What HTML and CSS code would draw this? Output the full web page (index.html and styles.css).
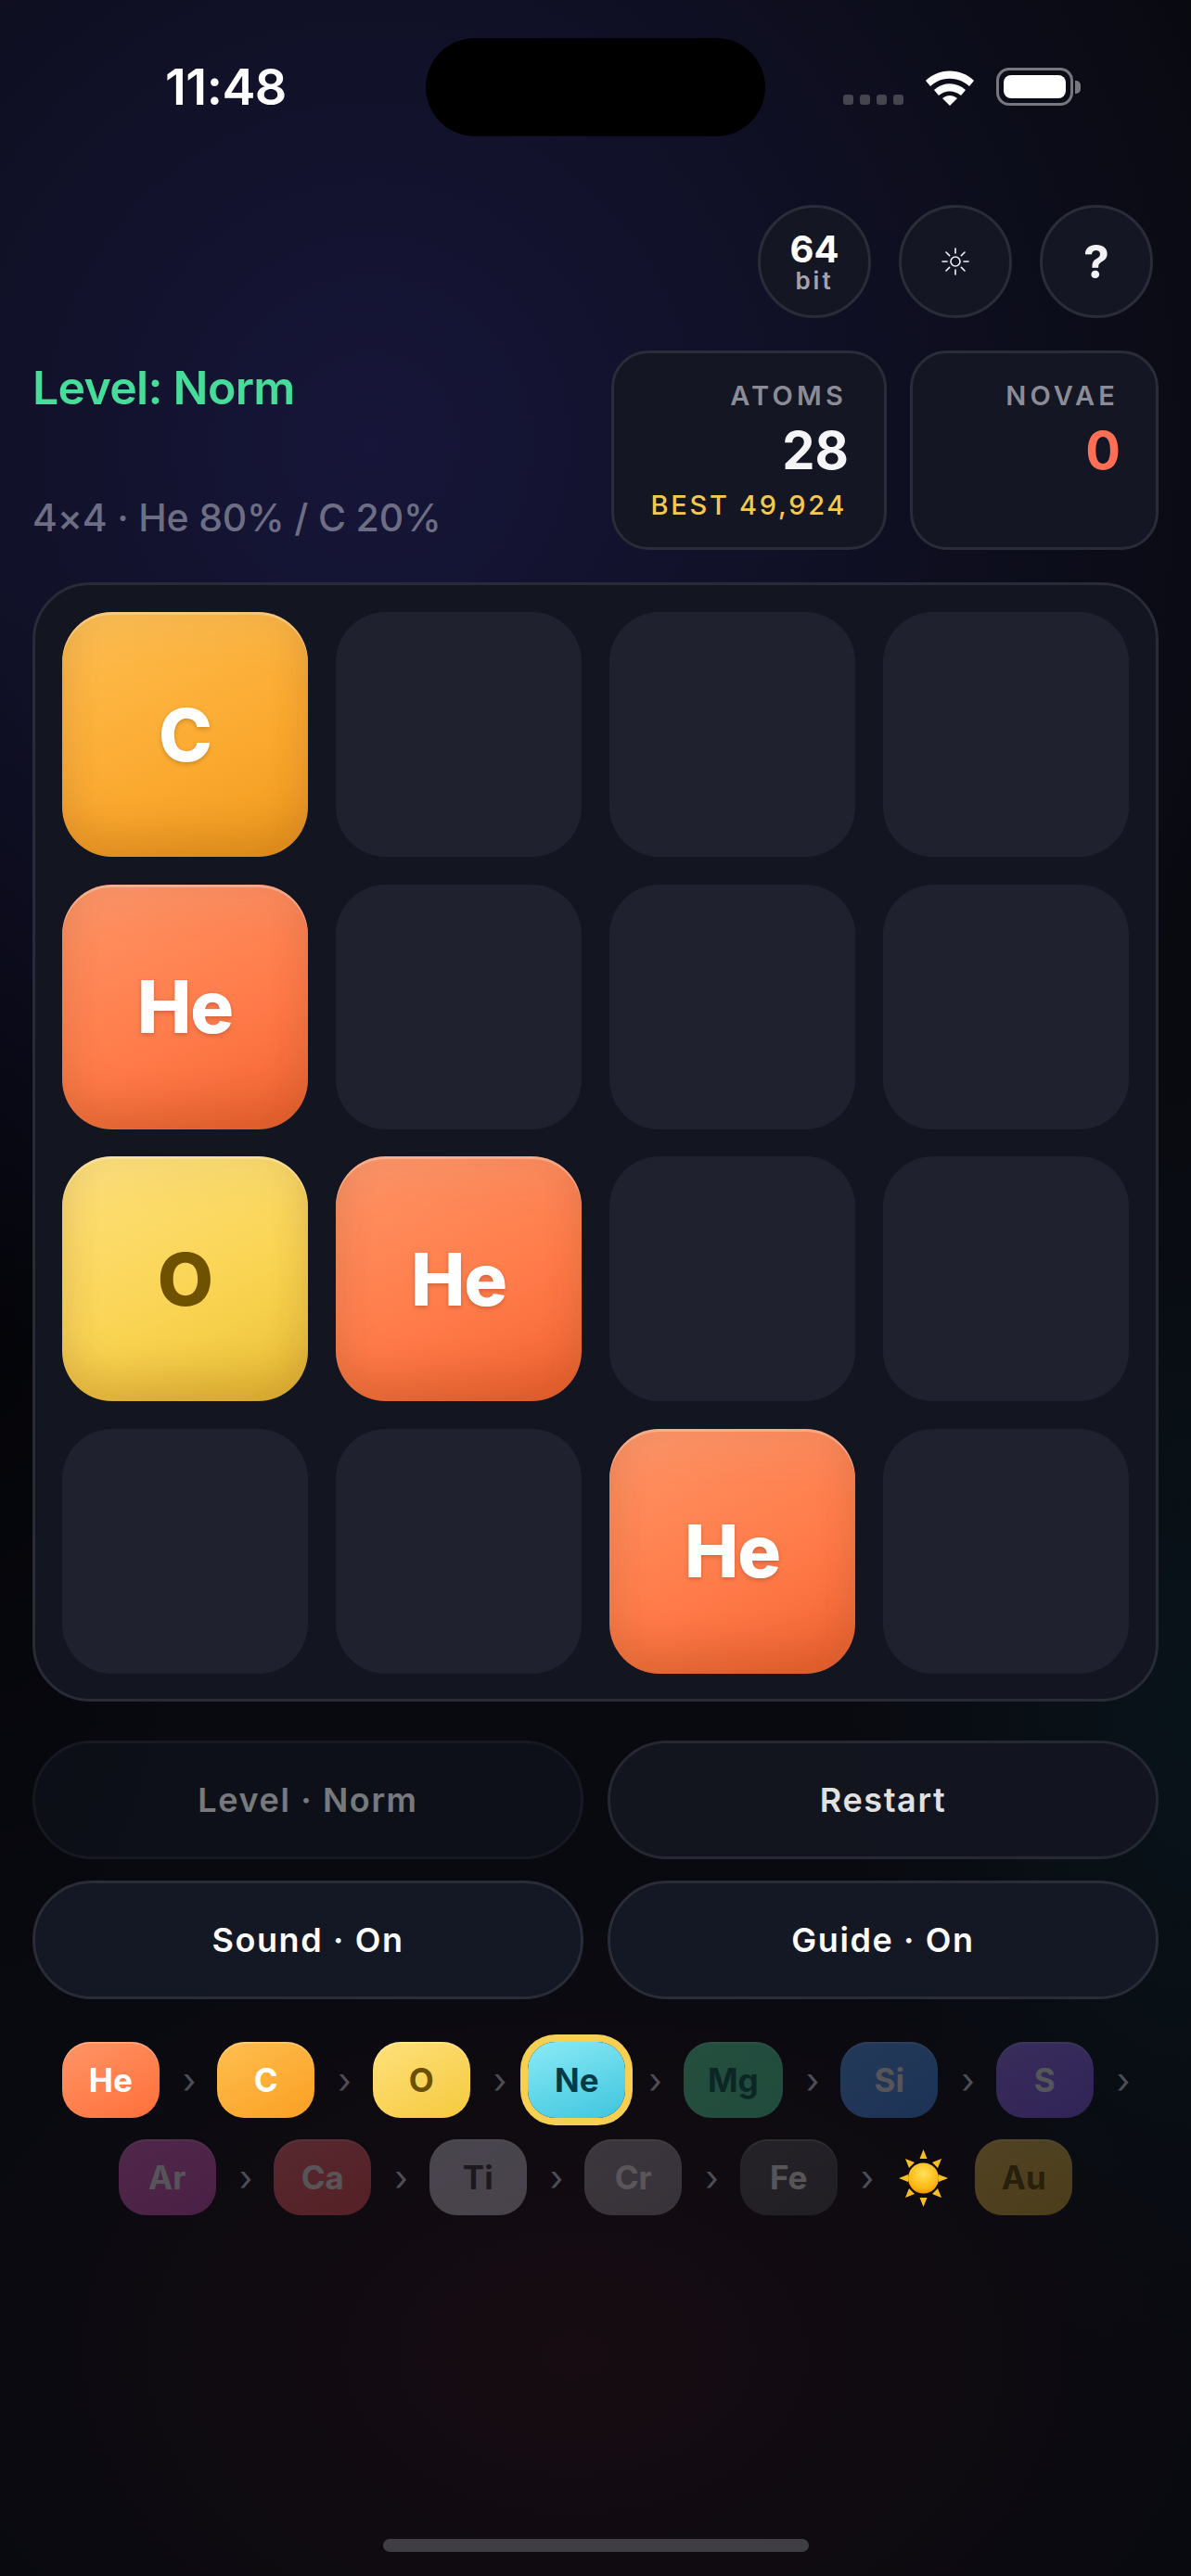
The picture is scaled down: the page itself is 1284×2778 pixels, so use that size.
FILE: index.html
```html
<!DOCTYPE html>
<html lang="en">
  <head>
    <meta charset="UTF-8" />
    <meta name="viewport" content="width=device-width, initial-scale=1.0" />
    <title>Atoms</title>
    <link rel="stylesheet" href="styles.css">
  </head>
  <body>
    <div class="island"></div>

    <div class="status-bar">
      <span class="time">11:48</span>
      <div class="status-icons">
        <div class="signal"><i></i><i></i><i></i><i></i></div>
        <svg class="wifi" width="56" height="40" viewBox="0 0 56 40">
          <path d="M2 13 C16 -1 40 -1 54 13 L49 19 C37 8 19 8 7 19 Z" fill="#fff" />
          <path d="M11 23 C21 14 35 14 45 23 L40 29 C33 23 23 23 16 29 Z" fill="#fff" />
          <path d="M20 32 C25 28 31 28 36 32 L28 40 Z" fill="#fff" />
        </svg>
        <div class="battery"><div class="battery-fill"></div></div>
        <div class="battery-cap"></div>
      </div>
    </div>

    <div class="round-buttons">
      <div class="round-btn">
        <span class="bit-num">64</span>
        <span class="bit-label">bit</span>
      </div>
      <div class="round-btn">
        <svg width="30" height="30" viewBox="0 0 30 30" fill="none" stroke="#f2f2f5" stroke-width="1.6" stroke-linecap="round">
          <circle cx="15" cy="15" r="5" />
          <path d="M15 1V6M15 24V29M1 15H6M24 15H29M5 5L8.6 8.6M21.4 21.4L25 25M5 25L8.6 21.4M21.4 8.6L25 5" />
        </svg>
      </div>
      <div class="round-btn"><span class="help">?</span></div>
    </div>

    <div class="info-row">
      <div class="level-info">
        <div class="level-name">Level: Norm</div>
        <div class="level-desc">4×4 · He 80% / C 20%</div>
      </div>
      <div class="stat-card atoms-card">
        <div class="stat-label">ATOMS</div>
        <div class="stat-value">28</div>
        <div class="stat-best">BEST 49,924</div>
      </div>
      <div class="stat-card novae-card">
        <div class="stat-label">NOVAE</div>
        <div class="stat-value red">0</div>
      </div>
    </div>

    <div class="board">
      <div class="tile tile-c">C</div><div class="cell"></div><div class="cell"></div><div class="cell"></div>
      <div class="tile tile-he">He</div><div class="cell"></div><div class="cell"></div><div class="cell"></div>
      <div class="tile tile-o">O</div><div class="tile tile-he">He</div><div class="cell"></div><div class="cell"></div>
      <div class="cell"></div><div class="cell"></div><div class="tile tile-he">He</div><div class="cell"></div>
    </div>

    <div class="actions">
      <button class="action disabled">Level · Norm</button>
      <button class="action restart">Restart</button>
      <button class="action">Sound · On</button>
      <button class="action">Guide · On</button>
    </div>

    <div class="chain">
      <div class="chip chip-he">He</div><span class="arrow">›</span>
      <div class="chip chip-c">C</div><span class="arrow">›</span>
      <div class="chip chip-o">O</div><span class="arrow">›</span>
      <div class="chip chip-ne">Ne</div><span class="arrow">›</span>
      <div class="chip locked chip-mg">Mg</div><span class="arrow">›</span>
      <div class="chip locked chip-si">Si</div><span class="arrow">›</span>
      <div class="chip locked chip-s">S</div><span class="arrow">›</span>
      <div class="chip locked chip-ar">Ar</div><span class="arrow">›</span>
      <div class="chip locked chip-ca">Ca</div><span class="arrow">›</span>
      <div class="chip locked chip-ti">Ti</div><span class="arrow">›</span>
      <div class="chip locked chip-cr">Cr</div><span class="arrow">›</span>
      <div class="chip locked chip-fe">Fe</div><span class="arrow">›</span>
      <svg class="sun" width="61" height="62" viewBox="0 0 61 62">
        <defs>
          <radialGradient id="sunFill" cx="50%" cy="35%" r="70%">
            <stop offset="0%" stop-color="#ffe15a" />
            <stop offset="70%" stop-color="#fdb813" />
            <stop offset="100%" stop-color="#f08a00" />
          </radialGradient>
        </defs>
        <g fill="#f9bf1e">
          <path d="M30.5 0L34.5 10H26.5Z" />
          <path d="M30.5 62L26.5 52H34.5Z" />
          <path d="M4 31L14 27V35Z" />
          <path d="M57 31L47 35V27Z" />
          <path d="M11 10L21 14L15 20Z" />
          <path d="M50 10L46 20L40 14Z" />
          <path d="M11 52L15 42L21 48Z" />
          <path d="M50 52L40 48L46 42Z" />
        </g>
        <circle cx="30.5" cy="31" r="16.5" fill="url(#sunFill)" />
      </svg>
      <div class="chip locked chip-au">Au</div>
    </div>

    <div class="home-indicator"></div>
  </body>
</html>
```

FILE: styles.css
```css
* {
  box-sizing: border-box;
}

html,
body {
  margin: 0;
  height: 2778px;
}

body {
  position: relative;
  overflow: hidden;
  display: flex;
  flex-direction: column;
  padding: 0 35px;
  font-family: Inter, "Liberation Sans", sans-serif;
  color: #fff;
  background-color: #090a10;
  background-image:
    radial-gradient(ellipse 1000px 1050px at 400px 480px, rgba(32, 30, 88, 0.58), transparent 100%),
    radial-gradient(ellipse 700px 480px at 620px 2540px, rgba(60, 18, 22, 0.26), transparent 100%),
    radial-gradient(ellipse 380px 700px at 1284px 1850px, rgba(6, 50, 56, 0.24), transparent 100%),
    radial-gradient(ellipse 240px 800px at 0 1400px, rgba(0, 0, 4, 0.6), transparent 100%);
}

/* status bar */
.island {
  position: absolute;
  left: 459px;
  top: 41px;
  width: 366px;
  height: 106px;
  border-radius: 53px;
  background: #000;
}

.status-bar {
  height: 221px;
  display: flex;
  justify-content: space-between;
  align-items: flex-start;
  padding-left: 143px;
}

.time {
  font-size: 54px;
  font-weight: 600;
  line-height: 68px;
  margin-top: 60px;
  letter-spacing: -0.5px;
}

.status-icons {
  display: flex;
  align-items: flex-end;
  margin-top: 73px;
  margin-right: 84px;
}

.signal {
  display: flex;
  gap: 7px;
  margin-right: 22px;
  margin-bottom: 1px;
}

.signal i {
  width: 11px;
  height: 11px;
  border-radius: 3px;
  background: #44454e;
}

.battery {
  width: 83px;
  height: 41px;
  margin-left: 22px;
  padding: 5px;
  border: 3px solid #77787e;
  border-radius: 14px;
}

.battery-fill {
  height: 100%;
  border-radius: 8px;
  background: #fff;
}

.battery-cap {
  width: 6px;
  height: 14px;
  margin-left: 2px;
  margin-bottom: 13px;
  border-radius: 0 5px 5px 0;
  background: #77787e;
}

/* round buttons */
.round-buttons {
  display: flex;
  justify-content: flex-end;
  gap: 30px;
  padding-right: 6px;
}

.round-btn {
  width: 122px;
  height: 122px;
  border-radius: 50%;
  border: 3px solid #2a2c38;
  background: #141723;
  display: flex;
  flex-direction: column;
  align-items: center;
  justify-content: center;
}

.bit-num {
  font-size: 40px;
  font-weight: 700;
  line-height: 42px;
}

.bit-label {
  font-size: 26px;
  font-weight: 600;
  line-height: 26px;
  letter-spacing: 3px;
  color: #a3a3ad;
}

.help {
  font-size: 50px;
  font-weight: 700;
  color: #f2f2f5;
}

/* level and score */
.info-row {
  display: flex;
  margin-top: 35px;
  gap: 25px;
}

.level-info {
  flex: 1;
  display: flex;
  flex-direction: column;
  justify-content: space-between;
  padding: 10px 0 8px;
}

.level-name {
  font-size: 50px;
  font-weight: 600;
  line-height: 60px;
  letter-spacing: -0.7px;
  color: #46dc9a;
}

.level-desc {
  font-size: 41px;
  font-weight: 500;
  line-height: 54px;
  letter-spacing: -0.2px;
  color: #6d6d84;
}

.stat-card {
  height: 215px;
  padding: 28px 40px 0 20px;
  border: 3px solid #2a2c38;
  border-radius: 40px;
  background: #141723;
  text-align: right;
}

.atoms-card {
  width: 297px;
}

.novae-card {
  width: 268px;
}

.stat-label {
  font-size: 29px;
  font-weight: 600;
  line-height: 36px;
  letter-spacing: 4.2px;
  color: #8c8c98;
}

.stat-value {
  font-size: 56px;
  font-weight: 700;
  line-height: 66px;
  margin-top: 8px;
  margin-right: -2px;
  color: #f5f5f8;
}

.stat-value.red {
  color: #ff6f55;
}

.stat-best {
  font-size: 29px;
  font-weight: 500;
  line-height: 36px;
  margin-top: 8px;
  letter-spacing: 2.7px;
  white-space: nowrap;
  color: #f6c94e;
}

/* board */
.board {
  display: grid;
  grid-template-columns: repeat(4, 1fr);
  grid-auto-rows: 264px;
  gap: 29.5px 30px;
  height: 1207px;
  margin-top: 35px;
  padding: 29px;
  border: 3px solid #292b37;
  border-radius: 62px;
  background: #131620;
}

.cell {
  border-radius: 54px;
  background: #1f222e;
}

.tile {
  display: flex;
  align-items: center;
  justify-content: center;
  border-radius: 54px;
  font-size: 78px;
  font-weight: 800;
  letter-spacing: -1px;
  text-shadow: 0 2px 5px rgba(0, 0, 0, 0.2);
  box-shadow:
    inset 0 3px 0 rgba(255, 255, 255, 0.28),
    inset 0 -26px 40px rgba(120, 50, 0, 0.18),
    inset 0 26px 40px rgba(150, 150, 150, 0.08);
}

.tile-he {
  background: linear-gradient(155deg, #ff9566 0%, #ff7a48 60%, #f06230 100%);
}

.tile-c {
  background: linear-gradient(155deg, #ffbf50 0%, #fba92f 60%, #ee9a1e 100%);
}

.tile-o {
  color: #6e5200;
  text-shadow: none;
  background: linear-gradient(155deg, #ffe17c 0%, #f9d350 60%, #e8bd35 100%);
}

/* action buttons */
.actions {
  display: grid;
  grid-template-columns: 1fr 1fr;
  gap: 23px 26px;
  margin-top: 42px;
}

.action {
  height: 128px;
  border: 3px solid #2a2c38;
  border-radius: 64px;
  background: #141824;
  color: #fff;
  font-family: inherit;
  font-size: 36px;
  font-weight: 600;
  letter-spacing: 1.6px;
}

.action.restart {
  opacity: 0.88;
  background: #141621;
}

.action.disabled {
  opacity: 0.45;
}

/* element chain */
.chain {
  display: flex;
  flex-wrap: wrap;
  justify-content: center;
  align-items: center;
  gap: 23px 25px;
  margin-top: 46px;
}

.chip {
  display: flex;
  align-items: center;
  justify-content: center;
  min-width: 105px;
  height: 82px;
  border-radius: 30px;
  font-size: 35px;
  font-weight: 700;
  box-shadow: inset 0 2px 0 rgba(255, 255, 255, 0.22);
}

.chip.locked {
  opacity: 0.3;
}

.arrow {
  width: 12.5px;
  text-align: center;
  font-size: 38px;
  line-height: 50px;
  color: #4d4d56;
}

.chip-s + .arrow {
  margin-right: 1px;
}

.sun {
  width: 61px;
  margin-top: 2px;
}

.chip-he {
  background: linear-gradient(150deg, #ff9566, #ff6f3a);
}

.chip-c {
  background: linear-gradient(150deg, #ffbf50, #fa9f22);
}

.chip-o {
  color: #6b5000;
  background: linear-gradient(150deg, #ffe17c, #f5c93e);
}

.chip-ne {
  color: #063a46;
  background: linear-gradient(160deg, #8aeaf6, #3fc5de);
  box-shadow: 0 0 0 8px #f7cf52;
}

.chip-mg {
  min-width: 107px;
  color: #076753;
  background: linear-gradient(150deg, #5be9a8, #4ee0a0);
}

.chip-si {
  background: linear-gradient(150deg, #5aa6ff, #4590f8);
}

.chip-s {
  background: linear-gradient(150deg, #a478ff, #8c58f5);
}

.chip-ar {
  background: linear-gradient(150deg, #ee6cd2, #d850c0);
}

.chip-ca {
  background: linear-gradient(150deg, #ff7078, #f55058);
}

.chip-ti {
  color: #3a3a40;
  background: linear-gradient(150deg, #cfccda, #c6c3d0);
}

.chip-cr {
  background: linear-gradient(150deg, #a09aa5, #918b96);
}

.chip-fe {
  background: linear-gradient(150deg, #585b60, #4a4d52);
}

.chip-au {
  color: #6a4d03;
  background: linear-gradient(150deg, #eec250, #e0b030);
}

.home-indicator {
  position: absolute;
  left: 413px;
  bottom: 26px;
  width: 459px;
  height: 14px;
  border-radius: 7px;
  background: #3e3e44;
}
```
